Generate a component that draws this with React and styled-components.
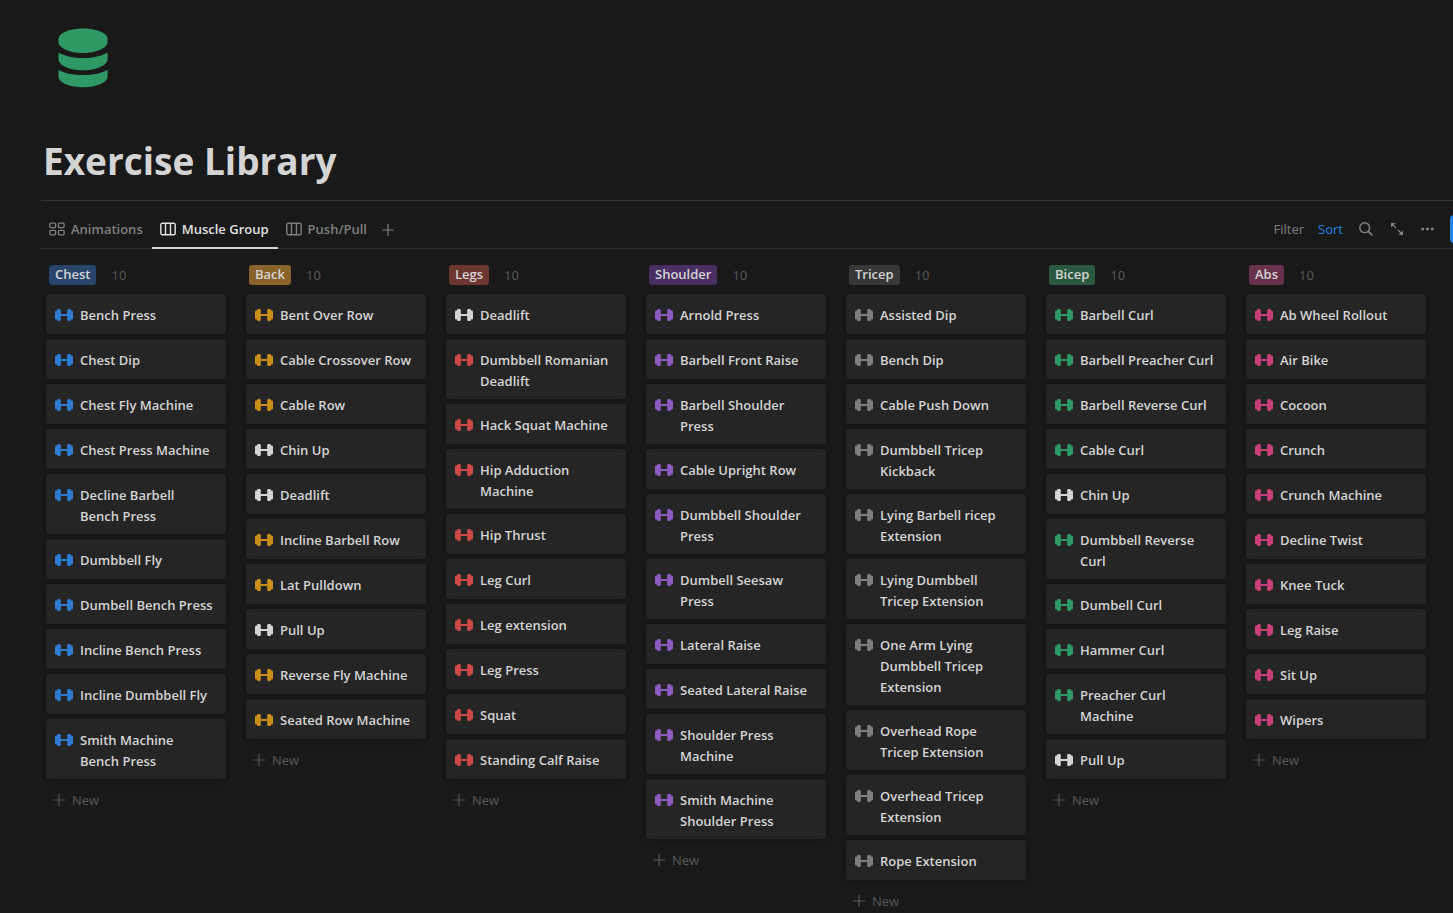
import React from 'react';
import styled, { createGlobalStyle } from 'styled-components';

const GlobalStyle = createGlobalStyle`
  * {
    box-sizing: border-box;
  }

  body {
    margin: 0;
    background: #191919;
    color: #d4d4d4;
    font-family: 'Segoe UI', 'Open Sans', 'Noto Sans', sans-serif;
    font-size: 13px;
  }

  button {
    padding: 0;
    background: none;
    border: none;
    font: inherit;
    cursor: pointer;
  }
`;

const Page = styled.main`
  height: 100vh;
  overflow: auto;
  scrollbar-width: none;
  padding-left: 41px;
`;

const PageIcon = styled.div`
  display: flex;
  padding: 28px 0 0 17px;
`;

const Title = styled.h1`
  margin: 48px 0 0 2px;
  height: 64px;
  font-size: 37px;
  font-weight: 700;
  line-height: 50px;
`;

const ViewBar = styled.div`
  display: flex;
  justify-content: space-between;
  height: 49px;
  padding-top: 9px;
  border-top: 1px solid #373737;
  border-bottom: 1px solid #2f2f2f;
`;

const Tabs = styled.nav`
  display: flex;
  height: 39px;
`;

const Tab = styled.button`
  display: flex;
  align-items: center;
  gap: 6px;
  padding: 0 9px 0 8px;
  border-bottom: 2px solid ${props => (props.$active ? '#d4d4d4' : 'transparent')};
  color: ${props => (props.$active ? '#e1e1e1' : '#7f7f7f')};
  font-weight: 600;
`;

const AddView = styled.button`
  display: flex;
  align-items: center;
  padding: 0 6px;
  color: #7f7f7f;
`;

const Tools = styled.div`
  display: flex;
  align-items: center;
  gap: 14px;
  height: 38px;
  margin-right: -57px;
`;

const Tool = styled.button`
  display: flex;
  align-items: center;
  justify-content: center;
  min-width: 17px;
  color: ${props => (props.$active ? '#2383e2' : '#7f7f7f')};
`;

const NewButton = styled.button`
  width: 60px;
  height: 28px;
  border-radius: 4px;
  background: #2383e2;
  color: white;
  font-weight: 600;
`;

const Board = styled.div`
  display: flex;
  align-items: flex-start;
  gap: 20px;
  padding: 16px 0 0 5px;
`;

const Column = styled.section`
  flex: 0 0 180px;
`;

const ColumnHeader = styled.header`
  display: flex;
  align-items: center;
  gap: 15px;
  height: 20px;
  margin-bottom: 9px;
  padding-left: 3px;
`;

const Tag = styled.h2`
  margin: 0;
  padding: 0 6px 2px;
  border-radius: 3px;
  background: ${props => props.$color};
  font-size: 13px;
  font-weight: 600;
  line-height: 18px;
`;

const Count = styled.span`
  color: #5a5a5a;
  font-size: 13px;
  line-height: 20px;
`;

const CardList = styled.ul`
  display: flex;
  flex-direction: column;
  gap: 5px;
  margin: 0;
  padding: 0;
  list-style: none;
`;

const Card = styled.a`
  display: flex;
  gap: 7px;
  min-height: 40px;
  padding: 11px 11px 7px 9px;
  border-radius: 3px;
  background: #252525;
  box-shadow: 0 0 0 1px rgba(15, 15, 15, 0.2), 0 2px 4px rgba(15, 15, 15, 0.2);
  color: #d4d4d4;
  font-weight: 600;
  line-height: 21px;
  text-decoration: none;

  svg {
    flex: none;
    margin-top: 4px;
  }

  &:hover {
    background: #2f2f2f;
  }
`;

const NewCard = styled.button`
  display: flex;
  align-items: center;
  gap: 7px;
  width: 100%;
  height: 32px;
  margin-top: 5px;
  padding-left: 7px;
  color: #5a5a5a;
`;

const DatabaseIcon = () => (
  <svg width="50" height="60" viewBox="0 0 50 60" fill="#2e9964" aria-hidden="true">
    <path d="M25 .5C38 .5 49.600 5 49.600 11V14C49.600 20 38 25 25 25S.5 20 .5 14V11C.5 5 12 .5 25 .5Z" />
    <path d="M.5 24.500C6 28 15 30 25 30S44 28 49.600 24.500V31C49.600 37.500 38 42.300 25 42.300S.5 37.500 .5 31Z" />
    <path d="M.5 41.700C6 45.200 15 47 25 47S44 45.200 49.600 41.700V48.500C49.600 54.500 38 59.300 25 59.300S.5 54.500 .5 48.500Z" />
  </svg>
);

const DumbbellIcon = ({ color }) => (
  <svg width="18" height="12" viewBox="0 0 18 12" fill={color} aria-hidden="true">
    <rect x="5" y="5" width="8" height="2" />
    <rect x="2" y="0" width="3.800" height="12" rx="1.300" />
    <rect x="12.200" y="0" width="3.800" height="12" rx="1.300" />
    <rect x="0" y="1.500" width="3.500" height="9" rx="1.300" />
    <rect x="14.500" y="1.500" width="3.500" height="9" rx="1.300" />
  </svg>
);

const GalleryIcon = () => (
  <svg width="16" height="14" viewBox="0 0 16 14" fill="none" stroke="currentColor" strokeWidth="1.3" aria-hidden="true">
    <rect x=".9" y="1.200" width="5.700" height="4.500" rx="1" />
    <rect x="9.400" y="1.200" width="5.700" height="4.500" rx="1" />
    <rect x=".9" y="8.300" width="5.700" height="4.500" rx="1" />
    <rect x="9.400" y="8.300" width="5.700" height="4.500" rx="1" />
  </svg>
);

const BoardIcon = () => (
  <svg width="16" height="14" viewBox="0 0 16 14" fill="none" stroke="currentColor" strokeWidth="1.4" aria-hidden="true">
    <rect x=".8" y="1.200" width="14.400" height="11.600" rx="1.500" />
    <path d="M5.500 1.500V12.500M10.500 1.500V12.500" />
  </svg>
);

const PlusIcon = () => (
  <svg width="12" height="12" viewBox="0 0 12 12" stroke="currentColor" strokeWidth="1.2" aria-hidden="true">
    <path d="M6 0V12M0 6H12" />
  </svg>
);

const SearchIcon = () => (
  <svg width="14" height="14" viewBox="0 0 14 14" fill="none" stroke="currentColor" strokeWidth="1.5" aria-hidden="true">
    <circle cx="5.700" cy="5.700" r="4.900" />
    <path d="M9.200 9.200L13.300 13.300" strokeWidth="1.8" />
  </svg>
);

const ExpandIcon = () => (
  <svg width="12" height="12" viewBox="0 0 12 12" fill="currentColor" aria-hidden="true">
    <path d="M0 0H4.600L0 4.600ZM12 12H7.400L12 7.400Z" />
    <path d="M1.500 1.500L5 5M10.500 10.500L7 7" stroke="currentColor" strokeWidth="1.3" />
  </svg>
);

const MoreIcon = () => (
  <svg width="13" height="4" viewBox="0 0 13 4" fill="currentColor" aria-hidden="true">
    <circle cx="1.700" cy="2" r="1.600" />
    <circle cx="6.500" cy="2" r="1.600" />
    <circle cx="11.300" cy="2" r="1.600" />
  </svg>
);

// trained in more than one column, so drawn neutral
const SHARED = ['Deadlift', 'Chin Up', 'Pull Up'];

const columns = [
  {
    name: 'Chest',
    tag: '#28456c',
    icon: '#2e7cd1',
    items: ['Bench Press', 'Chest Dip', 'Chest Fly Machine', 'Chest Press Machine', 'Decline Barbell Bench Press', 'Dumbbell Fly', 'Dumbell Bench Press', 'Incline Bench Press', 'Incline Dumbbell Fly', 'Smith Machine Bench Press'],
  },
  {
    name: 'Back',
    tag: '#89632a',
    icon: '#ca8e1b',
    items: ['Bent Over Row', 'Cable Crossover Row', 'Cable Row', 'Chin Up', 'Deadlift', 'Incline Barbell Row', 'Lat Pulldown', 'Pull Up', 'Reverse Fly Machine', 'Seated Row Machine'],
  },
  {
    name: 'Legs',
    tag: '#6e3630',
    icon: '#cd4945',
    items: ['Deadlift', 'Dumbbell Romanian Deadlift', 'Hack Squat Machine', 'Hip Adduction Machine', 'Hip Thrust', 'Leg Curl', 'Leg extension', 'Leg Press', 'Squat', 'Standing Calf Raise'],
  },
  {
    name: 'Shoulder',
    tag: '#492f64',
    icon: '#8d5bc1',
    items: ['Arnold Press', 'Barbell Front Raise', 'Barbell Shoulder Press', 'Cable Upright Row', 'Dumbbell Shoulder Press', 'Dumbell Seesaw Press', 'Lateral Raise', 'Seated Lateral Raise', 'Shoulder Press Machine', 'Smith Machine Shoulder Press'],
  },
  {
    name: 'Tricep',
    tag: '#373737',
    icon: '#7f7f7f',
    items: ['Assisted Dip', 'Bench Dip', 'Cable Push Down', 'Dumbbell Tricep Kickback', 'Lying Barbell ricep Extension', 'Lying Dumbbell Tricep Extension', 'One Arm Lying Dumbbell Tricep Extension', 'Overhead Rope Tricep Extension', 'Overhead Tricep Extension', 'Rope Extension'],
  },
  {
    name: 'Bicep',
    tag: '#2b593f',
    icon: '#2e9964',
    items: ['Barbell Curl', 'Barbell Preacher Curl', 'Barbell Reverse Curl', 'Cable Curl', 'Chin Up', 'Dumbbell Reverse Curl', 'Dumbell Curl', 'Hammer Curl', 'Preacher Curl Machine', 'Pull Up'],
  },
  {
    name: 'Abs',
    tag: '#69314c',
    icon: '#c94079',
    items: ['Ab Wheel Rollout', 'Air Bike', 'Cocoon', 'Crunch', 'Crunch Machine', 'Decline Twist', 'Knee Tuck', 'Leg Raise', 'Sit Up', 'Wipers'],
  },
];

const App = () => {
  return (
    <Page>
      <GlobalStyle />
      <PageIcon>
        <DatabaseIcon />
      </PageIcon>
      <Title>Exercise Library</Title>

      <ViewBar>
        <Tabs aria-label="Views">
          <Tab>
            <GalleryIcon />
            Animations
          </Tab>
          <Tab $active aria-current="page">
            <BoardIcon />
            Muscle Group
          </Tab>
          <Tab>
            <BoardIcon />
            Push/Pull
          </Tab>
          <AddView aria-label="Add view">
            <PlusIcon />
          </AddView>
        </Tabs>
        <Tools>
          <Tool>Filter</Tool>
          <Tool $active>Sort</Tool>
          <Tool aria-label="Search">
            <SearchIcon />
          </Tool>
          <Tool aria-label="Open full page">
            <ExpandIcon />
          </Tool>
          <Tool aria-label="More">
            <MoreIcon />
          </Tool>
          <NewButton aria-label="New" />
        </Tools>
      </ViewBar>

      <Board>
        {columns.map(column => (
          <Column key={column.name}>
            <ColumnHeader>
              <Tag $color={column.tag}>{column.name}</Tag>
              <Count>{column.items.length}</Count>
            </ColumnHeader>
            <CardList>
              {column.items.map(item => (
                <li key={item}>
                  <Card href="#">
                    <DumbbellIcon color={SHARED.includes(item) ? '#d4d4d4' : column.icon} />
                    {item}
                  </Card>
                </li>
              ))}
            </CardList>
            <NewCard>
              <PlusIcon />
              New
            </NewCard>
          </Column>
        ))}
      </Board>
    </Page>
  );
};

export default App;
